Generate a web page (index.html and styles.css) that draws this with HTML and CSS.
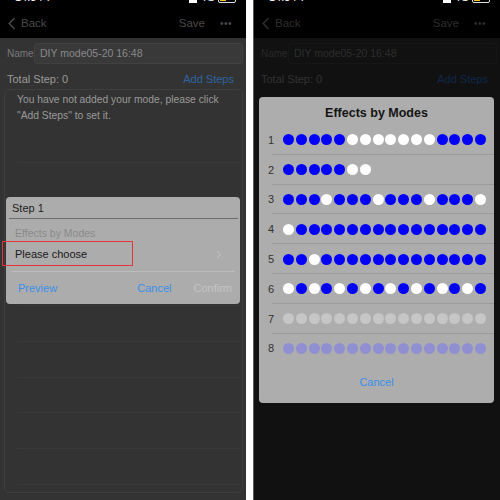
FILE: index.html
```html
<!DOCTYPE html>
<html lang="en">
<head>
    <meta charset="UTF-8">
    <meta name="viewport" content="width=device-width, initial-scale=1.0">
    <title>DIY mode</title>
    <link rel="stylesheet" href="styles.css">
</head>
<body>
<div class="screens">

    <!-- Left: step dialog -->
    <div class="phone phone-left">
        <header class="nav">
            <div class="status">
                <div class="status-inner">
                    <span>14:34 ⁊</span>
                    <span class="status-icons"><b class="bars"></b>4G <b class="battery"><b class="charge"></b></b></span>
                </div>
            </div>
            <div class="nav-row">
                <span class="back">
                    <svg width="8" height="13" viewBox="0 0 8 13"><polyline points="6.5,1 1.2,6.5 6.5,12" fill="none" stroke="currentColor" stroke-width="1.5"/></svg>
                    Back
                </span>
                <span class="nav-actions"><span>Save</span><span class="more">•••</span></span>
            </div>
        </header>

        <main class="content">
            <div class="name-row">
                <span class="label">Name</span>
                <div class="name-input">DIY mode05-20 16:48</div>
            </div>
            <div class="total-row">
                <span>Total Step: 0</span>
                <span class="add-steps">Add Steps</span>
            </div>
            <div class="steps-box">
                <p class="empty-text">You have not added your mode, please click<br>"Add Steps" to set it.</p>
                <div class="line-row"></div>
                <div class="line-row"></div>
                <div class="line-row"></div>
                <div class="line-row"></div>
                <div class="line-row"></div>
                <div class="line-row"></div>
                <div class="line-row"></div>
                <div class="line-row"></div>
                <div class="line-row"></div>
                <div class="line-row"></div>
            </div>
        </main>

        <div class="step-dialog">
            <div class="dlg-title">Step 1</div>
            <div class="dlg-hint">Effects by Modes</div>
            <div class="dlg-choose">
                <span>Please choose</span>
                <svg width="6" height="9" viewBox="0 0 6 9"><polyline points="1,1 4.5,4.5 1,8" fill="none" stroke="currentColor" stroke-width="1"/></svg>
            </div>
            <div class="dlg-sep"></div>
            <div class="dlg-buttons">
                <span class="btn-link">Preview</span>
                <span class="btn-link push">Cancel</span>
                <span class="btn-off">Confirm</span>
            </div>
        </div>
        <div class="mark"></div>
    </div>

    <!-- Right: effects picker -->
    <div class="phone phone-right">
        <header class="nav">
            <div class="status">
                <div class="status-inner">
                    <span>14:34 ⁊</span>
                    <span class="status-icons"><b class="bars"></b>4G <b class="battery"><b class="charge"></b></b></span>
                </div>
            </div>
            <div class="nav-row">
                <span class="back">
                    <svg width="8" height="13" viewBox="0 0 8 13"><polyline points="6.5,1 1.2,6.5 6.5,12" fill="none" stroke="currentColor" stroke-width="1.5"/></svg>
                    Back
                </span>
                <span class="nav-actions"><span>Save</span><span class="more">•••</span></span>
            </div>
        </header>

        <main class="content">
            <div class="name-row">
                <span class="label">Name</span>
                <div class="name-input">DIY mode05-20 16:48</div>
            </div>
            <div class="total-row">
                <span>Total Step: 0</span>
                <span class="add-steps">Add Steps</span>
            </div>
        </main>

        <div class="modes-dialog">
            <div class="modes-title">Effects by Modes</div>
            <div class="modes-list" id="modes-list"></div>
            <div class="modes-cancel">Cancel</div>
        </div>
    </div>
</div>

<script>
    // B = blue, W = white, G = grey, P = purple
    const modes = [
        'BBBBBWWWWWWWBBBB',
        'BBBBBWW',
        'BBBWBBBWBBBWBBBW',
        'WBBBBBBBBBBBBBBB',
        'BBWBBBBBBBBBBBBB',
        'WBWBWBWBWBWBWBWB',
        'GGGGGGGGGGGGGGGG',
        'PPPPPPPPPPPPPPPP'
    ];

    const list = document.getElementById('modes-list');
    modes.forEach((pattern, i) => {
        const row = document.createElement('div');
        row.className = 'mode-row';
        let html = '<span class="mode-num">' + (i + 1) + '</span><span class="dots">';
        for (const c of pattern) {
            html += '<i class="dot dot-' + c.toLowerCase() + '"></i>';
        }
        row.innerHTML = html + '</span>';
        list.appendChild(row);
    });
</script>
</body>
</html>
```

FILE: styles.css
```css
* {
    margin: 0;
    padding: 0;
    box-sizing: border-box;
}

body {
    font-family: 'Liberation Sans', Arial, sans-serif;
    background: #ffffff;
    width: 500px;
    height: 500px;
    overflow: hidden;
}

.screens {
    display: flex;
    gap: 7px;
    height: 500px;
}

.phone {
    position: relative;
    width: 246px;
    height: 500px;
    overflow: hidden;
}

.phone-left {
    background: #333333;
}

.phone-right {
    width: 247px;
    background: #111111;
    border-left: 1px solid #5a5a5a;
}

/* Nav bar */
.nav {
    background: #000;
    height: 38px;
}

.status {
    height: 3px;
    overflow: hidden;
}

.status-inner {
    display: flex;
    justify-content: space-between;
    padding: 0 10px 0 15px;
    margin-top: -9px;
    font-size: 11px;
    line-height: 12px;
    color: #fff;
}

.status-icons {
    display: flex;
    align-items: flex-end;
    gap: 3px;
}

.bars {
    display: inline-block;
    width: 8px;
    height: 10px;
    background: #fff;
}

.battery {
    display: inline-block;
    width: 18px;
    height: 10px;
    border: 1px solid #ddd;
    border-radius: 2px;
    padding: 1px;
}

.charge {
    display: block;
    width: 6px;
    height: 100%;
    background: #f5c518;
}

.nav-row {
    height: 35px;
    padding: 5px 14px 0 8px;
    display: flex;
    justify-content: space-between;
    align-items: center;
    font-size: 11.5px;
}

.back {
    display: flex;
    align-items: center;
    gap: 5px;
}

.nav-actions {
    display: flex;
    align-items: center;
    gap: 15px;
}

.more {
    font-size: 10px;
    letter-spacing: 0.5px;
}

.phone-left .nav-row { color: #4a4a4a; }
.phone-right .nav-row { color: #2e2e2e; }

/* Page body */
.content {
    padding: 5px 3px 0 4px;
}

.name-row {
    display: flex;
    align-items: center;
    height: 21px;
    padding-left: 3px;
    font-size: 10px;
}

.label {
    width: 27px;
}

.name-input {
    flex: 1;
    height: 21px;
    line-height: 19px;
    padding-left: 5px;
    border-radius: 3px;
    font-size: 10.5px;
}

.total-row {
    display: flex;
    justify-content: space-between;
    align-items: center;
    height: 20px;
    margin-top: 5px;
    padding: 0 9px 0 3px;
    font-size: 11px;
}

.phone-left .label { color: #7a7a7a; }
.phone-left .name-input { background: #393939; border: 1px solid #414141; color: #8a8a8a; }
.phone-left .total-row { color: #9a9a9a; }
.phone-left .add-steps { color: #2e64a0; }

.phone-right .label { color: #2a2a2a; }
.phone-right .name-input { border: 1px solid #161616; color: #2e2e2e; }
.phone-right .total-row { color: #333; }
.phone-right .add-steps { color: #10294a; }

.steps-box {
    height: 404px;
    border: 1px solid #3e3e3e;
    border-radius: 5px;
    padding-top: 2px;
}

.empty-text {
    padding-left: 12px;
    font-size: 10.3px;
    line-height: 16px;
    color: #9a9a9a;
    margin-bottom: 3px;
}

.line-row {
    height: 35.8px;
    margin: 0 2px 0 12px;
    border-bottom: 1px solid #3a3a3a;
}

/* Step dialog (left) */
.step-dialog {
    position: absolute;
    left: 6px;
    top: 197px;
    width: 234px;
    height: 107px;
    background: #acacac;
    border-radius: 4px;
    font-size: 11px;
}

.dlg-title {
    height: 22px;
    line-height: 22px;
    margin: 0 2px 0 3px;
    padding-left: 3px;
    border-bottom: 1px solid #6a6a6a;
    color: #1e1e1e;
}

.dlg-hint {
    margin-top: 5px;
    height: 18px;
    line-height: 18px;
    padding-left: 9px;
    font-size: 10.5px;
    color: #8a8a8a;
}

.dlg-choose {
    display: flex;
    justify-content: space-between;
    align-items: center;
    height: 20px;
    margin-top: 2px;
    padding: 0 18px 0 9px;
    color: #1a1a1a;
}

.dlg-choose svg {
    color: #c4c4c4;
}

.dlg-sep {
    height: 1px;
    margin: 7px 5px 0 6px;
    background: #bcbcbc;
}

.dlg-buttons {
    display: flex;
    align-items: center;
    height: 31px;
    padding: 0 8px 0 12px;
    gap: 22px;
}

.btn-link {
    color: #3a8fea;
}

.push {
    margin-left: auto;
}

.btn-off {
    color: #c4c4c4;
}

.mark {
    position: absolute;
    left: 2px;
    top: 241px;
    width: 131px;
    height: 25px;
    border: 1px solid #e5343c;
}

/* Effects dialog (right) */
.modes-dialog {
    position: absolute;
    left: 5px;
    top: 97px;
    width: 235px;
    height: 306px;
    background: #adadad;
    border-radius: 4px;
}

.modes-title {
    height: 28px;
    padding-top: 4px;
    line-height: 24px;
    text-align: center;
    font-size: 12.5px;
    font-weight: bold;
    color: #151515;
}

.mode-row {
    display: flex;
    align-items: center;
    height: 29.8px;
    padding-left: 9px;
    background: linear-gradient(#9c9c9c, #9c9c9c) no-repeat 13px 100% / calc(100% - 13px) 1px;
}

.mode-row:last-child {
    background: none;
}

.mode-num {
    width: 15px;
    font-size: 11px;
    color: #333;
}

.dots {
    display: flex;
    gap: 1.8px;
}

.dot {
    display: block;
    width: 11px;
    height: 11px;
    border-radius: 50%;
}

.dot-b { background: #0000fa; }
.dot-w { background: #ffffff; }
.dot-g { background: #c6c6c6; }
.dot-p { background: #8f8fd2; }

.modes-cancel {
    height: 38px;
    line-height: 38px;
    text-align: center;
    font-size: 11px;
    color: #3a8fea;
}
```
